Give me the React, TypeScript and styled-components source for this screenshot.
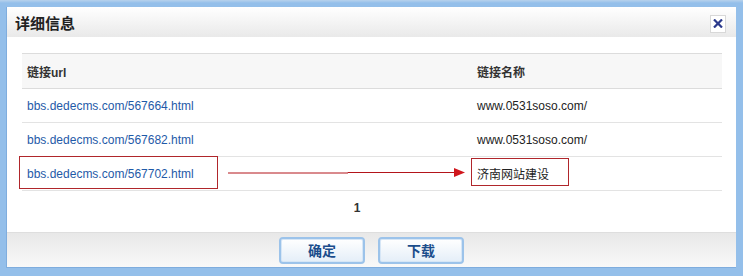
import React from 'react';
import styled, { createGlobalStyle } from 'styled-components';

const GlobalStyle = createGlobalStyle`
	html, body {
		margin: 0;
		padding: 0;
		background: #94bfea;
	}
	body {
		font-family: 'Liberation Sans', Arial, 'Noto Sans CJK SC', sans-serif;
		font-size: 12px;
	}
`;

const Frame = styled.div`
	width: 743px;
	height: 276px;
	box-sizing: border-box;
	padding: 7px 7px 8px 6px;
	background: linear-gradient(#b8d2ec 0, #94bfea 3px, #94bfea 100%);
`;

const Dialog = styled.div`
	position: relative;
	height: 100%;
	box-sizing: border-box;
	border-left: 1px solid #7fadde;
	border-bottom: 1px solid #7fadde;
	background: #fff;
	display: flex;
	flex-direction: column;
`;

const TitleBar = styled.div`
	height: 30px;
	display: flex;
	align-items: center;
	justify-content: space-between;
	padding: 0 10px 0 8px;
	background: linear-gradient(#ffffff, #e9e9e9);
`;

const Title = styled.h2`
	margin: 0;
	font-size: 15px;
	font-weight: bold;
	color: #222;
	font-family: 'Noto Sans CJK SC', sans-serif;
`;

const CloseButton = styled.button`
	width: 16px;
	height: 18px;
	margin-top: 3px;
	padding: 0;
	display: flex;
	align-items: center;
	justify-content: center;
	border: 1px solid #d8d8d8;
	background: #fff;
	cursor: pointer;
`;

const Body = styled.div`
	position: relative;
	flex: 1;
	padding: 16px 14px 0 15px;
`;

const Table = styled.table`
	width: 700px;
	border-collapse: collapse;
	table-layout: fixed;
`;

const HeadCell = styled.th<{ $w?: number }>`
	width: ${p => (p.$w ? `${p.$w}px` : 'auto')};
	height: 34px;
	padding: 0 5px;
	text-align: left;
	background: #f7f7f7;
	border-top: 1px solid #dcdcdc;
	border-bottom: 1px solid #dcdcdc;
	font-size: 12px;
	font-weight: bold;
	color: #333;
	font-family: 'Liberation Sans', Arial, 'Noto Sans CJK SC', sans-serif;
`;

const Cell = styled.td`
	height: 33px;
	padding: 0 5px;
	border-bottom: 1px solid #e3e3e3;
	color: #222;
	font-family: 'Liberation Sans', Arial, 'Noto Sans CJK SC', sans-serif;
`;

const Link = styled.a`
	color: #1f5aa8;
	text-decoration: none;
`;

const Pager = styled.div`
	display: flex;
	justify-content: center;
	padding: 10px 30px 0 0;
	font-weight: bold;
	font-size: 12px;
	color: #333;
`;

const Footer = styled.div`
	height: 34px;
	display: flex;
	align-items: center;
	justify-content: center;
	gap: 13px;
	border-top: 1px solid #dedede;
	background: linear-gradient(#e8e8e8, #f9f9f9);
`;

const Button = styled.button`
	width: 86px;
	height: 27px;
	border: 2px solid #9cc3ea;
	border-radius: 4px;
	box-shadow: inset 0 0 0 1px #d6e6f6;
	background: linear-gradient(#ffffff, #e4eef8);
	color: #1b4d8c;
	font-size: 14px;
	font-weight: bold;
	font-family: 'Noto Sans CJK SC', sans-serif;
	cursor: pointer;
`;

const Highlight = styled.div<{ $x: number; $y: number; $w: number; $h: number }>`
	position: absolute;
	left: ${p => p.$x}px;
	top: ${p => p.$y}px;
	width: ${p => p.$w}px;
	height: ${p => p.$h}px;
	border: 1px solid #b0262b;
	box-sizing: border-box;
	pointer-events: none;
`;

const Arrow = styled.svg`
	position: absolute;
	left: 221px;
	top: 159px;
	pointer-events: none;
`;

const rows = [
	{ url: 'bbs.dedecms.com/567664.html', name: 'www.0531soso.com/' },
	{ url: 'bbs.dedecms.com/567682.html', name: 'www.0531soso.com/' },
	{ url: 'bbs.dedecms.com/567702.html', name: '济南网站建设' },
];

const App = () => {
	return (
		<>
			<GlobalStyle />
			<Frame>
				<Dialog>
					<TitleBar>
						<Title>详细信息</Title>
						<CloseButton aria-label='close'>
							<svg width='10' height='9' viewBox='0 0 10 9'>
								<path d='M1 0.5 L9 8.5 M9 0.5 L1 8.5' stroke='#2b3a8c' strokeWidth='2.2' />
							</svg>
						</CloseButton>
					</TitleBar>
					<Body>
						<Table>
							<thead>
								<tr>
									<HeadCell $w={440}>链接url</HeadCell>
									<HeadCell>链接名称</HeadCell>
								</tr>
							</thead>
							<tbody>
								{rows.map(row => (
									<tr key={row.url}>
										<Cell>
											<Link href='#'>{row.url}</Link>
										</Cell>
										<Cell>{row.name}</Cell>
									</tr>
								))}
							</tbody>
						</Table>
						<Pager>1</Pager>
					</Body>
					<Footer>
						<Button>确定</Button>
						<Button>下载</Button>
					</Footer>

					{/* annotation marks drawn over the table */}
					<Highlight $x={12} $y={149} $w={199} $h={33} />
					<Highlight $x={464} $y={151} $w={98} $h={28} />
					<Arrow width='240' height='14' viewBox='0 0 240 14'>
						<path d='M0 7 L120 7 L120 6.5 L228 6.5' stroke='#b3141a' strokeWidth='1' fill='none' />
						<polygon points='226,2 237,6.5 226,11' fill='#d0161c' />
					</Arrow>
				</Dialog>
			</Frame>
		</>
	);
};

export default App;
